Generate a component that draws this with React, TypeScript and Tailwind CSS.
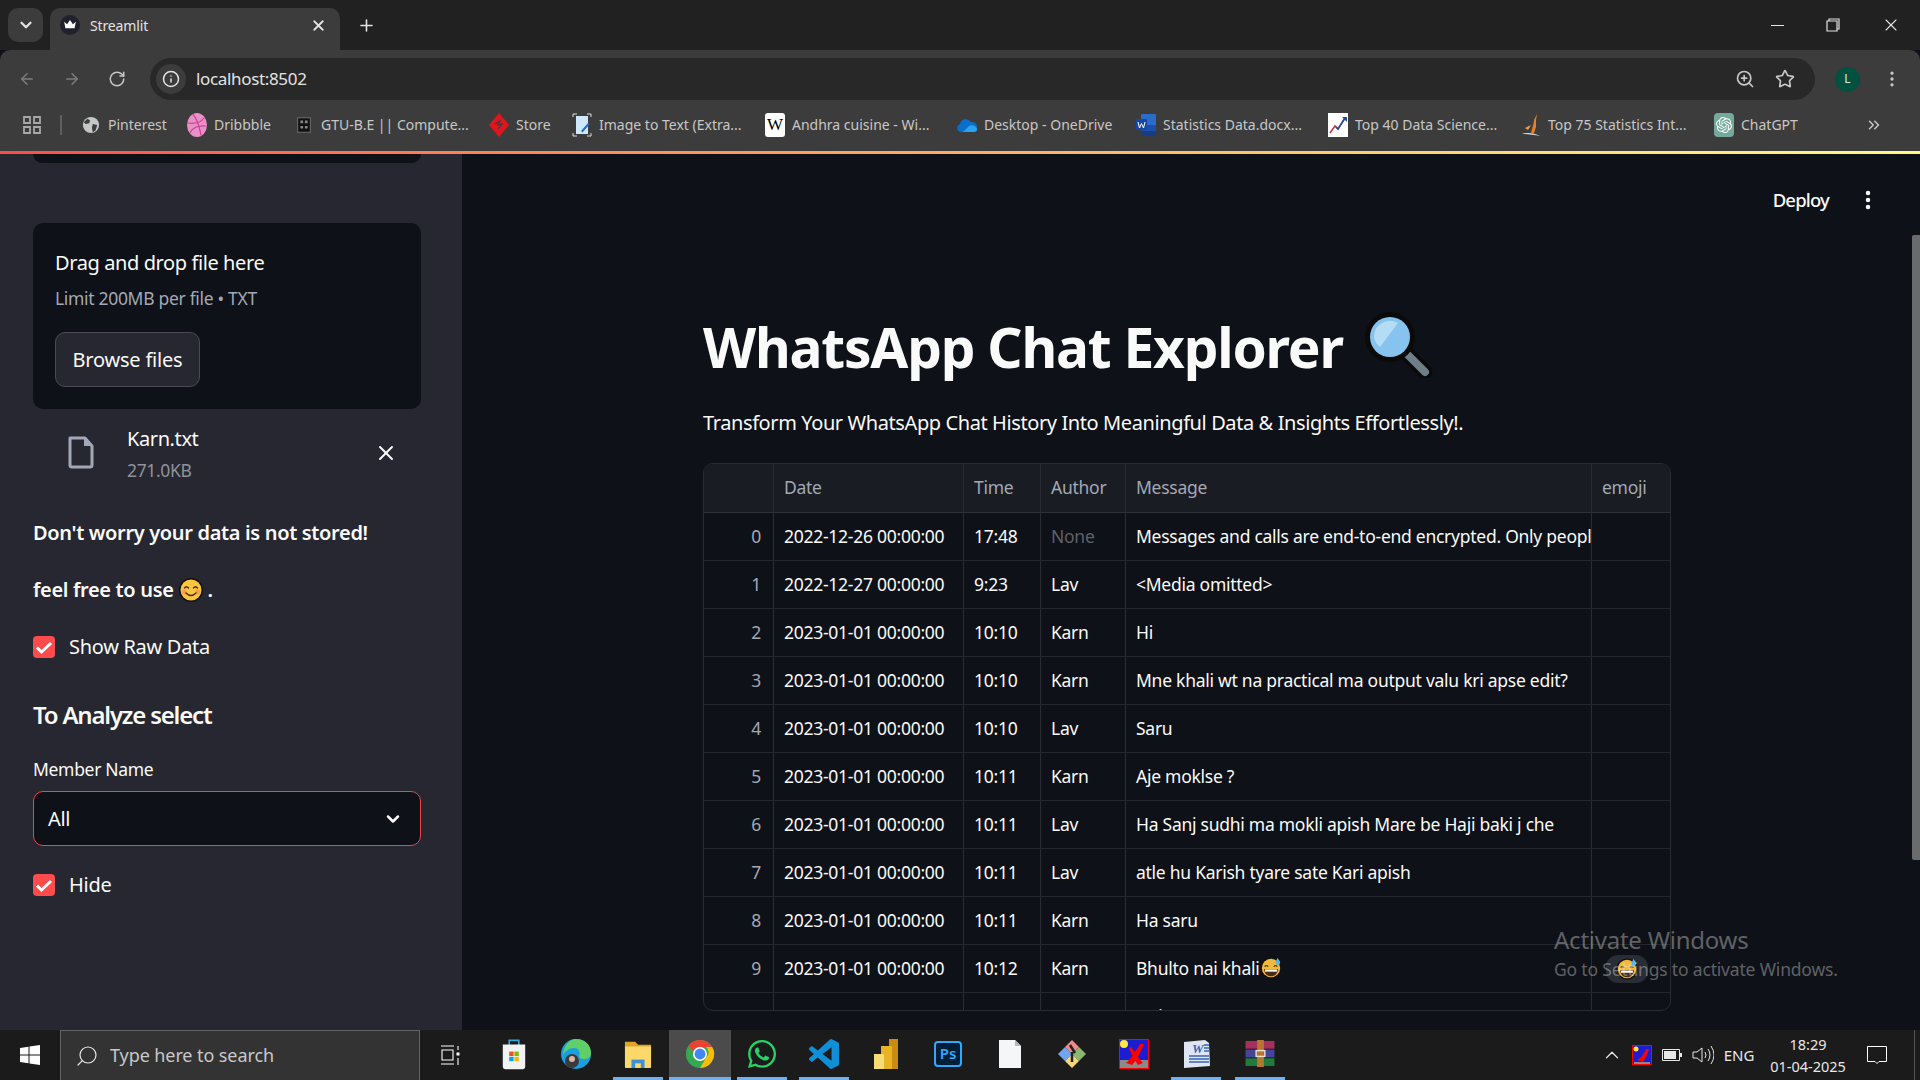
import { ArrowLeft, ArrowRight, ChevronDown, ChevronUp, ChevronsRight, EllipsisVertical, Info, Plus, RotateCw, Search, Star, X, ZoomIn } from "lucide-react";
import { FaWhatsapp } from "react-icons/fa";
import { SiOpenai } from "react-icons/si";
import type { ReactNode } from "react";

const Dribbble = () => (
  <svg viewBox="0 0 20 24" className="w-5 h-6">
    <ellipse cx="10" cy="12" rx="10" ry="12" fill="#ea8fc8" />
    <g fill="none" stroke="#c9458f" strokeWidth="1.2">
      <path d="M6 1.5c3 3 6 10 8 21" />
      <path d="M0.5 10c6 1 13 0 16.500-5" />
      <path d="M3 20c2-5 8-8 16-7" />
    </g>
  </svg>
);

const bookmarks: { label: string; width: string; icon: ReactNode }[] = [
  {
    label: "Pinterest",
    width: "w-[106px]",
    icon: (
      <svg viewBox="0 0 20 20" className="w-[18px] h-[18px]">
        <circle cx="10" cy="10" r="9" fill="#c4c7c5" />
        <path d="M6 3l3 2-1 3-4 1-2-2zM12 9l5 1-2 6-3 2-1-5z" fill="#3c3c3c" />
      </svg>
    ),
  },
  { label: "Dribbble", width: "w-[107px]", icon: <Dribbble /> },
  {
    label: "GTU-B.E || Compute...",
    width: "w-[195px]",
    icon: (
      <svg viewBox="0 0 20 20" className="w-[18px] h-[18px]">
        <rect x="3" y="2" width="14" height="16" fill="#111" stroke="#777" />
        <path d="M6 5h3v3H6zM11 5h3v3h-3zM6 11h3v3H6zM11 11h3v3h-3z" fill="#888" />
      </svg>
    ),
  },
  {
    label: "Store",
    width: "w-[83px]",
    icon: (
      <svg viewBox="0 0 20 24" className="w-5 h-6">
        <path d="M10 0l10 12-10 12L0 12z" fill="#e0161f" />
        <path d="M6 11l5-3-2 4 4-1-4 5" fill="none" stroke="#3c3c3c" strokeWidth="1.2" />
      </svg>
    ),
  },
  {
    label: "Image to Text (Extra...",
    width: "w-[193px]",
    icon: (
      <svg viewBox="0 0 20 24" className="w-5 h-6">
        <path d="M1 4V1h4M15 1h4v3M1 20v3h4M15 23h4v-3" fill="none" stroke="#ddd" strokeWidth="1" />
        <path d="M4 3h12v18H4z" fill="#cfe8fb" />
        <path d="M9 18l7-8 1.500 1.500-7 8z" fill="#1a6fd0" />
      </svg>
    ),
  },
  {
    label: "Andhra cuisine - Wi...",
    width: "w-[192px]",
    icon: (
      <span className="flex items-center justify-center w-5 h-6 bg-white rounded-[3px] text-black text-[17px] leading-none font-['Liberation_Serif',serif]">
        W
      </span>
    ),
  },
  {
    label: "Desktop - OneDrive",
    width: "w-[179px]",
    icon: (
      <svg viewBox="0 0 20 16" className="w-5 h-4">
        <path d="M4 15a4 4 0 0 1-1-7.800A6 6 0 0 1 14 5a4.500 4.500 0 0 1 2 10z" fill="#0a6fc9" />
        <path d="M6 15l6-6c2-1 4-1 5 0 2 .5 3 2 3 3.500S19 15 17 15z" fill="#2aa4ee" />
      </svg>
    ),
  },
  {
    label: "Statistics Data.docx...",
    width: "w-[192px]",
    icon: (
      <svg viewBox="0 0 20 22" className="w-5 h-[22px]">
        <rect x="5" y="0" width="15" height="22" rx="1" fill="#2b6ccb" />
        <rect x="5" y="11" width="15" height="6" fill="#1c50a8" />
        <rect x="5" y="17" width="15" height="5" fill="#143d8a" />
        <rect x="0" y="5" width="11" height="11" rx="1" fill="#1747a6" />
        <path d="M2 8l1.500 6 2-4.500 2 4.500L9 8" fill="none" stroke="#fff" strokeWidth="1" />
      </svg>
    ),
  },
  {
    label: "Top 40 Data Science...",
    width: "w-[193px]",
    icon: (
      <svg viewBox="0 0 20 24" className="w-5 h-6">
        <rect width="20" height="24" fill="#fff" />
        <path d="M2 20l5-7 3 3 7-11" fill="none" stroke="#b9324f" strokeWidth="1.500" />
        <path d="M8 14l2 2 7-11" fill="none" stroke="#1d4fa8" strokeWidth="1.500" />
        <path d="M14 4h5v5z" fill="#1d4fa8" />
      </svg>
    ),
  },
  {
    label: "Top 75 Statistics Int...",
    width: "w-[193px]",
    icon: (
      <svg viewBox="0 0 20 24" className="w-5 h-6">
        <path d="M10 20c1-5 3-9 3-13l3-6-1 6 0 7-2 6z" fill="#e8801e" />
        <path d="M4 15l6-3-3 5z" fill="#e8a04e" />
        <path d="M1 21c6-2 12-1 18 2-6-1-12-2-18-2z" fill="#d8d8e8" />
      </svg>
    ),
  },
  {
    label: "ChatGPT",
    width: "w-[151px]",
    icon: (
      <span className="flex items-center justify-center w-5 h-6 rounded-[4px] bg-[#74aa9c] text-white">
        <SiOpenai className="w-4 h-4" />
      </span>
    ),
  },
];

const rows = [
  ["0", "2022-12-26 00:00:00", "17:48", "None", "Messages and calls are end-to-end encrypted. Only people in this chat can read them"],
  ["1", "2022-12-27 00:00:00", "9:23", "Lav", "<Media omitted>"],
  ["2", "2023-01-01 00:00:00", "10:10", "Karn", "Hi"],
  ["3", "2023-01-01 00:00:00", "10:10", "Karn", "Mne khali wt na practical ma output valu kri apse edit?"],
  ["4", "2023-01-01 00:00:00", "10:10", "Lav", "Saru"],
  ["5", "2023-01-01 00:00:00", "10:11", "Karn", "Aje moklse ?"],
  ["6", "2023-01-01 00:00:00", "10:11", "Lav", "Ha Sanj sudhi ma mokli apish Mare be Haji baki j che"],
  ["7", "2023-01-01 00:00:00", "10:11", "Lav", "atle hu Karish tyare sate Kari apish"],
  ["8", "2023-01-01 00:00:00", "10:11", "Karn", "Ha saru"],
  ["9", "2023-01-01 00:00:00", "10:12", "Karn", "Bhulto nai khali"],
  ["10", "2023-01-01 00:00:00", "10:12", "Lav", "Haina"],
];

const GrinSweat = () => (
  <svg viewBox="0 0 24 24" className="w-[22px] h-[22px] shrink-0">
    <circle cx="12" cy="12" r="11.500" fill="#111" />
    <circle cx="12" cy="12" r="10" fill="#f3b93a" />
    <path d="M5 10.500q2-2 4 0M15 10.500q2-2 4 0" fill="none" stroke="#5b3a10" strokeWidth="1.300" />
    <path d="M4.500 13h15c0 5-3.500 8-7.500 8s-7.500-3-7.500-8z" fill="#4a2a12" />
    <path d="M5.500 13.500h13v2.500h-13z" fill="#fff" />
    <path d="M19 1c2 2.500 3 4 3 5a2.500 2.500 0 0 1-5 0c0-1 1-2.500 2-5z" fill="#55b7ee" />
  </svg>
);

const Smile = () => (
  <svg viewBox="0 0 24 24" className="w-6 h-6 inline-block">
    <circle cx="12" cy="12" r="12" fill="#111" />
    <circle cx="12" cy="12" r="10.500" fill="#fbc63c" />
    <circle cx="5.500" cy="14" r="2.500" fill="#f58a5a" opacity="0.7" />
    <circle cx="18.500" cy="14" r="2.500" fill="#f58a5a" opacity="0.7" />
    <path d="M5.500 10q2-2.500 4 0M14.500 10q2-2.500 4 0M7 15q5 5 10 0" fill="none" stroke="#4a2a12" strokeWidth="1.400" strokeLinecap="round" />
  </svg>
);

const Checkbox = ({ label }: { label: string }) => (
  <div className="flex items-center gap-[14px]">
    <span className="flex items-center justify-center w-[22px] h-[22px] rounded-[4px] bg-[#ff4b4b]">
      <svg viewBox="0 0 22 22" className="w-[22px] h-[22px]">
        <path d="M4 11.500l4.500 4.500L18 7" fill="none" stroke="#fff" strokeWidth="3" />
      </svg>
    </span>
    <span className="text-[20px] leading-[24px] tracking-[-0.015em] text-[#fafafa]">{label}</span>
  </div>
);

const Sidebar = () => (
  <aside className="w-[462px] shrink-0 h-full bg-[#262730] px-[33px] text-[#fafafa] overflow-hidden">
    <div className="h-[9px] w-[388px] bg-[#0e1117] rounded-b-[10px]" />
    <div className="mt-[60px] h-[186px] w-[388px] bg-[#0e1117] rounded-[10px] px-[22px] pt-[26px]">
      <div className="text-[20px] leading-[28px] tracking-[-0.02em]">Drag and drop file here</div>
      <div className="mt-[9px] text-[17.5px] leading-[24px] tracking-[-0.018em] text-[#a3a8b4]">Limit 200MB per file • TXT</div>
      <button className="mt-[22px] w-[145px] h-[55px] rounded-[10px] bg-[#262730] border border-[#4a4b55] text-[20px] tracking-[-0.01em]">
        Browse files
      </button>
    </div>
    <div className="mt-[17px] h-[56px] w-[388px] flex items-center pl-[35px]">
      <svg viewBox="0 0 26 33" className="w-[26px] h-[33px] shrink-0 -translate-y-[2px]">
        <path d="M2 2h15l7 8v19a2 2 0 0 1-2 2H4a2 2 0 0 1-2-2z" fill="none" stroke="#a3a8b8" strokeWidth="3" strokeLinejoin="round" />
        <path d="M16 2l8 8h-8z" fill="#a3a8b8" />
      </svg>
      <div className="ml-[33px]">
        <div className="text-[20px] leading-[26px] tracking-[-0.02em]">Karn.txt</div>
        <div className="mt-[6px] text-[17.5px] leading-[24px] tracking-[-0.02em] text-[#8f929b]">271.0KB</div>
      </div>
      <X className="ml-auto mr-[23px] w-6 h-6 -translate-y-[1px]" strokeWidth={2} />
    </div>
    <div className="mt-[37px] text-[20px] leading-[28px] font-semibold tracking-[-0.017em]">Don't worry your data is not stored!</div>
    <div className="mt-[29px] h-[28px] flex items-center gap-[5px] text-[20px] leading-[28px] font-semibold tracking-[-0.017em]">
      <span>feel free to use</span>
      <Smile />
      <span>.</span>
    </div>
    <div className="mt-[31px]">
      <Checkbox label="Show Raw Data" />
    </div>
    <div className="mt-[39px] text-[24px] leading-[34px] font-semibold tracking-[-0.05em]">To Analyze select</div>
    <div className="mt-[25px] text-[17.5px] leading-[24px] tracking-[-0.018em]">Member Name</div>
    <div className="mt-[10px] h-[55px] w-[388px] flex items-center justify-between bg-[#0e1117] border border-[#f0444b] rounded-[10px] pl-[14px] pr-[17px]">
      <span className="text-[20px] tracking-[-0.02em]">All</span>
      <ChevronDown className="w-[20px] h-[20px]" strokeWidth={3} />
    </div>
    <div className="mt-[27px]">
      <Checkbox label="Hide" />
    </div>
  </aside>
);

const DataTable = () => (
  <div className="mt-[25px] w-[968px] h-[548px] border border-[#2a2c33] rounded-[10px] overflow-hidden text-[17.5px] tracking-[-0.015em]">
    <div className="flex h-[49px] bg-[#1a1c24] text-[#a3a8b4] border-b border-[#2f3139]">
      <div className="w-[70px] shrink-0 border-r border-[#2a2c33]" />
      <div className="w-[190px] shrink-0 border-r border-[#2a2c33] px-[10px] leading-[46px]">Date</div>
      <div className="w-[77px] shrink-0 border-r border-[#2a2c33] px-[10px] leading-[46px]">Time</div>
      <div className="w-[85px] shrink-0 border-r border-[#2a2c33] px-[10px] leading-[46px]">Author</div>
      <div className="w-[466px] shrink-0 border-r border-[#2a2c33] px-[10px] leading-[46px]">Message</div>
      <div className="flex-1 px-[10px] leading-[46px]">emoji</div>
    </div>
    {rows.map((row) => (
      <div key={row[0]} className="flex h-[48px] border-b border-[#25272e] text-[#fafafa] leading-[46px]">
        <div className="w-[70px] shrink-0 border-r border-[#2a2c33] pr-[12px] text-right text-[#a3a8b4]">{row[0]}</div>
        <div className="w-[190px] shrink-0 border-r border-[#2a2c33] px-[10px]">{row[1]}</div>
        <div className="w-[77px] shrink-0 border-r border-[#2a2c33] px-[10px]">{row[2]}</div>
        <div className={`w-[85px] shrink-0 border-r border-[#2a2c33] px-[10px] ${row[3] === "None" ? "text-[#5f6168]" : ""}`}>{row[3]}</div>
        <div className="w-[466px] shrink-0 border-r border-[#2a2c33] pl-[10px] pb-[1px] overflow-hidden whitespace-nowrap flex items-center gap-[1px]">
          {row[4]}
          {row[0] === "9" && <GrinSweat />}
        </div>
        <div className="flex-1 flex items-center justify-center">
          {row[0] === "9" && (
            <span className="flex items-center justify-center w-[42px] h-[28px] ml-[-8px] rounded-[12px] bg-[#2a2c36]">
              <GrinSweat />
            </span>
          )}
        </div>
      </div>
    ))}
  </div>
);

const Chrome = () => (
  <header className="shrink-0 font-['Noto_Sans',sans-serif]">
    <div className="h-[50px] bg-[#202120] flex items-end pl-2 text-[#e3e3e3]">
      <div className="self-start mt-2 w-[35px] h-[34px] rounded-[10px] bg-[#3c3c3c] flex items-center justify-center">
        <ChevronDown className="w-[18px] h-[18px]" strokeWidth={3} />
      </div>
      <div className="ml-[7px] w-[290px] h-[42px] rounded-t-[10px] bg-[#3c3c3c] flex items-center pl-[10px] pr-[13px] pb-[8px]">
        <span className="w-5 h-5 rounded-full bg-[#20212b] flex items-center justify-center">
          <svg viewBox="0 0 16 12" className="w-[14px] h-[10px]">
            <path d="M1 2l3.500 3L8 0l3.500 5L15 2l-1.500 8h-11z" fill="#fff" />
          </svg>
        </span>
        <span className="ml-[10px] text-[14px] tracking-[-0.01em]">Streamlit</span>
        <X className="ml-auto w-[17px] h-[17px]" strokeWidth={2.5} />
      </div>
      <Plus className="self-start mt-[16px] ml-[17px] w-[19px] h-[19px]" strokeWidth={2} />
      <div className="ml-auto self-start flex items-center h-[50px] mt-0">
        <div className="w-[54px] flex justify-center">
          <span className="w-[13px] h-px bg-[#e3e3e3]" />
        </div>
        <div className="w-[58px] flex justify-center">
          <svg viewBox="0 0 14 14" className="w-[14px] h-[14px]">
            <path d="M3 3V1h10v10h-2M1 3h10v10H1z" fill="none" stroke="#e3e3e3" strokeWidth="1.200" />
          </svg>
        </div>
        <div className="w-[58px] flex justify-center">
          <X className="w-[20px] h-[20px]" strokeWidth={1.3} />
        </div>
      </div>
    </div>
    <div className="h-[50px] bg-[#3c3c3c] flex items-end rounded-t-[10px] text-[#c7c7c7]">
      <div className="h-[42px] w-[150px] flex items-center pl-[18px] gap-[27px] text-[#7c7c7c]">
        <ArrowLeft className="w-[18px] h-[18px]" />
        <ArrowRight className="w-[18px] h-[18px]" />
        <RotateCw className="w-[18px] h-[18px] text-[#c7c7c7]" />
      </div>
      <div className="w-[1665px] h-[42px] rounded-full bg-[#282828] flex items-center pl-[6px] pr-[20px]">
        <span className="w-[30px] h-[30px] rounded-full bg-[#3c3c3c] flex items-center justify-center">
          <Info className="w-[18px] h-[18px] text-[#e3e3e3]" />
        </span>
        <span className="ml-[10px] text-[17px] tracking-[-0.02em] text-[#e3e3e3]">localhost:8502</span>
        <ZoomIn className="ml-auto w-[20px] h-[20px]" />
        <Star className="ml-[20px] w-[20px] h-[20px]" />
      </div>
      <div className="h-[42px] flex-1 flex items-center pl-[20px] pr-[18px] justify-between">
        <span className="w-[25px] h-[25px] rounded-full bg-[#00513f] text-[#d8e8e3] text-[12px] flex items-center justify-center">L</span>
        <EllipsisVertical className="w-[20px] h-[20px]" />
      </div>
    </div>
    <div className="h-[51px] bg-[#3c3c3c] flex items-center pl-[23px] pb-[2px] text-[14px] text-[#c7c7c7]">
      <svg viewBox="0 0 18 18" className="w-[18px] h-[18px] shrink-0">
        <path d="M1 1h6v6H1zM11 1h6v6h-6zM1 11h6v6H1zM11 11h6v6h-6z" fill="none" stroke="#a8a8a8" strokeWidth="1.800" />
      </svg>
      <span className="ml-[19px] mr-[19px] w-[2px] h-[20px] bg-[#5e5e5e] shrink-0" />
      {bookmarks.map((b) => (
        <div key={b.label} className={`${b.width} shrink-0 flex items-center gap-[7px] whitespace-nowrap`}>
          <span className="w-5 flex items-center justify-center shrink-0">{b.icon}</span>
          <span>{b.label}</span>
        </div>
      ))}
      <ChevronsRight className="w-[18px] h-[18px]" />
    </div>
    <div className="h-[3px] bg-linear-to-r from-[#ff4b4b] to-[#fffd80]" />
  </header>
);

const taskIcons: { key: string; bar: string; node: ReactNode }[] = [
  {
    key: "store",
    bar: "",
    node: (
      <svg viewBox="0 0 30 40" className="w-[28px] h-[32px]">
        <path d="M9 9V3h12v6" fill="none" stroke="#35a8e0" strokeWidth="2" />
        <path d="M1 8h28v28a3 3 0 0 1-3 3H4a3 3 0 0 1-3-3z" fill="#f2f2f2" />
        <path d="M9 17h5.500v5.500H9z" fill="#f25022" />
        <path d="M15.500 17H21v5.500h-5.500z" fill="#7fba00" />
        <path d="M9 23.500h5.500V29H9z" fill="#00a4ef" />
        <path d="M15.500 23.500H21V29h-5.500z" fill="#ffb900" />
      </svg>
    ),
  },
  {
    key: "edge",
    bar: "",
    node: (
      <svg viewBox="0 0 32 32" className="w-[32px] h-[32px]">
        <circle cx="16" cy="16" r="15" fill="#1a9fe0" />
        <path d="M16 1c9 0 15 6 15 14 0 4-3 6-7 6-3 0-5-1-5-3 2-3 0-8-5-8-5 0-9 3-11 7C4 8 9 1 16 1z" fill="#5fd068" />
        <circle cx="12" cy="23" r="7" fill="#3a3a3a" />
        <circle cx="12" cy="21" r="3" fill="#d8b8a8" />
      </svg>
    ),
  },
  {
    key: "explorer",
    bar: "bg-[#6fb1f0] w-[50px]",
    node: (
      <svg viewBox="0 0 30 32" className="w-[28px] h-[30px]">
        <path d="M1 3h11l3 3h14v4H1z" fill="#e0a526" />
        <path d="M1 8h28v22a1 1 0 0 1-1 1H2a1 1 0 0 1-1-1z" fill="#fcd76a" />
        <path d="M8 22h14v9H8z" fill="#3d8fd8" />
        <path d="M12 26h6v5h-6z" fill="#fcd76a" />
      </svg>
    ),
  },
  {
    key: "chrome",
    bar: "bg-[#6fb1f0] w-full",
    node: (
      <svg viewBox="0 0 32 32" className="w-[30px] h-[30px]">
        <circle cx="16" cy="16" r="15" fill="#34a853" />
        <path d="M16 1a15 15 0 0 1 13 7.500H16a7.500 7.500 0 0 0-7 5L3.500 7.500A15 15 0 0 1 16 1z" fill="#ea4335" />
        <path d="M29 8.500A15 15 0 0 1 16 31l6.500-11a7.500 7.500 0 0 0 0-11.500z" fill="#fbbc05" />
        <circle cx="16" cy="16" r="7.500" fill="#fff" />
        <circle cx="16" cy="16" r="5.800" fill="#4285f4" />
      </svg>
    ),
  },
  {
    key: "whatsapp",
    bar: "bg-[#6fb1f0] w-[50px]",
    node: <FaWhatsapp className="w-[32px] h-[32px] text-[#25d366]" />,
  },
  {
    key: "vscode",
    bar: "bg-[#6fb1f0] w-[50px]",
    node: (
      <svg viewBox="0 0 24 24" className="w-[30px] h-[30px]">
        <path
          d="M23.150 2.587L18.210.21a1.494 1.494 0 0 0-1.705.29l-9.460 8.630-4.120-3.128a.999.999 0 0 0-1.276.057L.327 7.261A1 1 0 0 0 .326 8.740L3.899 12 .326 15.260a1 1 0 0 0 .001 1.479L1.650 17.940a.999.999 0 0 0 1.276.057l4.120-3.128 9.460 8.630a1.492 1.492 0 0 0 1.704.29l4.942-2.377A1.500 1.500 0 0 0 24 20.060V3.939a1.500 1.500 0 0 0-.850-1.352zm-5.146 14.861L10.826 12l7.178-5.448v10.896z"
          fill="#0e8fd8"
        />
      </svg>
    ),
  },
  {
    key: "powerbi",
    bar: "",
    node: (
      <svg viewBox="0 0 24 30" className="w-[24px] h-[30px]">
        <path d="M15 0h9v30h-9z" fill="#c98c10" />
        <path d="M7 7h11v23H7z" fill="#eab326" />
        <path d="M0 15h10v15H0z" fill="#f8dc74" />
      </svg>
    ),
  },
  {
    key: "ps",
    bar: "",
    node: (
      <span className="w-[28px] h-[26px] rounded-[4px] bg-[#001e36] border-2 border-[#31a8ff] text-[#31a8ff] text-[15px] leading-[21px] font-semibold text-center font-['Noto_Sans',sans-serif]">
        Ps
      </span>
    ),
  },
  {
    key: "file",
    bar: "",
    node: (
      <svg viewBox="0 0 22 28" className="w-[22px] h-[28px]">
        <path d="M0 0h16l6 6v22H0z" fill="#f5f6f8" />
        <path d="M16 0l6 6h-6z" fill="#b8b8b8" />
      </svg>
    ),
  },
  {
    key: "git",
    bar: "",
    node: (
      <svg viewBox="0 0 30 30" className="w-[30px] h-[30px]">
        <path d="M15 1l7 7-7 7-7-7z" fill="#f08a8a" />
        <path d="M22 8l7 7-7 7-7-7z" fill="#8ab86e" />
        <path d="M8 8l7 7-7 7-7-7z" fill="#72a5f0" />
        <path d="M15 15l7 7-7 7-7-7z" fill="#f5d77a" />
        <path d="M13 6l5 8M15 13v10" stroke="#222" strokeWidth="2.500" />
      </svg>
    ),
  },
  {
    key: "xampp",
    bar: "",
    node: (
      <svg viewBox="0 0 30 30" className="w-[30px] h-[30px]">
        <rect x="0.500" y="0.500" width="29" height="29" fill="#1c1cd0" stroke="#f00" />
        <path d="M1 21h28v8H1z" fill="#8a8a8a" />
        <circle cx="5" cy="5" r="4" fill="#ffe93b" />
        <path d="M7 24C12 20 17 12 21 5h4C22 12 18 21 13 26zM12 8c4 4 7 11 12 16l-5 2C15 20 12 14 10 10z" fill="#f00" />
      </svg>
    ),
  },
  {
    key: "word",
    bar: "bg-[#6fb1f0] w-[50px]",
    node: (
      <svg viewBox="0 0 30 28" className="w-[30px] h-[28px]">
        <path d="M3 2l21-2 4 3 1 23-26 2z" fill="#dfe6f3" />
        <text x="11" y="13" fontSize="13" fontWeight="700" fontStyle="italic" fontFamily="'Liberation Serif', serif" fill="#3b64b4">W</text>
        <path d="M23 5h5M23 8h5M23 11h5M8 16h20M8 19h20M8 22h20" stroke="#3b64b4" strokeWidth="1.400" />
      </svg>
    ),
  },
  {
    key: "winrar",
    bar: "bg-[#6fb1f0] w-[50px] ml-[8px]",
    node: (
      <svg viewBox="0 0 30 28" className="w-[30px] h-[27px] ml-[3px]">
        <rect y="1" width="30" height="8" fill="#a5305c" />
        <rect y="10" width="30" height="8" fill="#45459c" />
        <rect y="19" width="30" height="8" fill="#1f7a3c" />
        <path d="M12 0h7v28h-7z" fill="#b8762e" />
        <rect x="11" y="11" width="9" height="6" fill="none" stroke="#e8e0c8" strokeWidth="1.500" />
      </svg>
    ),
  },
];

const Taskbar = () => (
  <footer className="h-[50px] shrink-0 bg-[#1b1b1b] flex text-white font-['Noto_Sans',sans-serif]">
    <div className="w-[60px] shrink-0 flex items-center justify-center">
      <svg viewBox="0 0 20 20" className="w-5 h-5">
        <path d="M0 3l8.500-1.200V9.500H0zM9.500 1.600L20 0v9.500H9.500zM0 10.500h8.500v7.700L0 17zM9.500 10.500H20V20L9.500 18.400z" fill="#fff" />
      </svg>
    </div>
    <div className="w-[360px] shrink-0 bg-[#333333] border border-[#636363] border-b-0 flex items-center pl-[14px]">
      <Search className="w-[24px] h-[24px] -scale-x-100 text-[#e8e8e8]" strokeWidth={1.2} />
      <span className="ml-[11px] text-[18px] tracking-[-0.005em] text-[#c8c8c8]">Type here to search</span>
    </div>
    <div className="w-[63px] shrink-0 flex items-center justify-center pr-[3px]">
      <svg viewBox="0 0 20 20" className="w-5 h-5">
        <path d="M1 1h13M1 19h13M2 5h11v10H2zM18 1v4M18 13v7" fill="none" stroke="#fff" strokeWidth="1.100" />
        <rect x="16.500" y="7.500" width="3" height="3" fill="#fff" />
      </svg>
    </div>
    {taskIcons.map((t) => (
      <div key={t.key} className={`w-[62px] shrink-0 flex flex-col ${t.key === "chrome" ? "bg-[#4b4b4b]" : ""}`}>
        <div className="flex-1 flex items-center justify-center">{t.node}</div>
        <div className={`h-[3px] mx-auto ${t.bar}`} />
      </div>
    ))}
    <div className="ml-auto flex items-center text-[#e8e8e8]">
      <div className="w-[30px] flex justify-center">
        <ChevronUp className="w-[22px] h-[22px]" strokeWidth={1.3} />
      </div>
      <div className="w-[30px] flex justify-center">
        <svg viewBox="0 0 20 20" className="w-5 h-5">
          <rect x="0.500" y="0.500" width="19" height="19" fill="#1c1cd0" stroke="#f00" />
          <circle cx="4" cy="4" r="2.500" fill="#ffe93b" />
          <path d="M2 17h16v2H2z" fill="#8a8a8a" />
          <path d="M5 15c4-2 7-6 9-11h3c-1 5-4 10-6 13z" fill="#f00" />
        </svg>
      </div>
      <div className="w-[30px] flex justify-center">
        <svg viewBox="0 0 20 12" className="w-[20px] h-[12px]">
          <path d="M.5.5h17v11H.5z" fill="none" stroke="#e8e8e8" />
          <path d="M2 2h12v8H2z" fill="#e8e8e8" />
          <path d="M18 4h2v4h-2z" fill="#e8e8e8" />
        </svg>
      </div>
      <div className="w-[32px] flex justify-center">
        <svg viewBox="0 0 22 20" className="w-[22px] h-[20px]">
          <path d="M1 7h4l5-4v14l-5-4H1z" fill="none" stroke="#e8e8e8" />
          <path d="M13 7q2 3 0 6M16 4q4 6 0 12M19 1q6 9 0 18" fill="none" stroke="#e8e8e8" />
        </svg>
      </div>
      <div className="w-[40px] text-center text-[15px]">ENG</div>
      <div className="w-[98px] text-center text-[14.5px] leading-[22px]">
        <div>18:29</div>
        <div>01-04-2025</div>
      </div>
      <div className="w-[40px] flex justify-center">
        <svg viewBox="0 0 20 20" className="w-5 h-5">
          <path d="M.5 1.500h19v15H12l-2 2-2-2H.5z" fill="none" stroke="#fff" />
        </svg>
      </div>
      <div className="w-[23px] h-full">
        <div className="w-px h-full ml-[17px] bg-[#555]" />
      </div>
    </div>
  </footer>
);

export default function App() {
  return (
    <div className="h-screen w-full flex flex-col overflow-hidden bg-[#0e1117]">
      <Chrome />
      <div className="flex-1 min-h-0 flex font-['Noto_Sans',sans-serif]">
        <Sidebar />
        <main className="relative flex-1 min-w-0 pl-[241px] text-[#fafafa] overflow-hidden">
          <div className="absolute right-0 top-[81px] w-2 h-[625px] bg-[#6b6b6e] rounded-l-[2px]" />
          <div className="h-[92px] -ml-[241px] flex items-center justify-end pr-[40px]">
            <span className="text-[18.5px] tracking-[-0.045em] font-medium">Deploy</span>
            <EllipsisVertical className="ml-[27px] w-6 h-6" strokeWidth={2.5} />
          </div>
          <div className="mt-[65px] flex items-center h-[72px]">
            <h1 className="text-[55px] leading-[72px] font-bold tracking-[-0.022em]">WhatsApp Chat Explorer</h1>
            <svg viewBox="0 0 70 68" className="ml-[20px] w-[70px] h-[68px] -translate-y-[3px]">
              <path d="M44 44l18 18" stroke="#0a0a0a" strokeWidth="15" strokeLinecap="round" />
              <path d="M44 44l18 18" stroke="#6f7f88" strokeWidth="8" strokeLinecap="round" />
              <circle cx="27" cy="27" r="25" fill="#0a0a0a" />
              <circle cx="27" cy="27" r="20" fill="#86c3ee" />
              <path d="M11 27a16 16 0 0 1 24-14L17 37a16 16 0 0 1-6-10z" fill="#b5dcf5" />
            </svg>
          </div>
          <p className="mt-[25px] h-[30px] text-[20px] leading-[30px] tracking-[-0.02em]">
            Transform Your WhatsApp Chat History Into Meaningful Data &amp; Insights Effortlessly!.
          </p>
          <DataTable />
          <div className="absolute left-[1092px] top-[770px] text-white/35 pointer-events-none">
            <div className="text-[24px] leading-[32px] tracking-[-0.01em]">Activate Windows</div>
            <div className="text-[17.5px] leading-[26px] tracking-[-0.01em]">Go to Settings to activate Windows.</div>
          </div>
        </main>
      </div>
      <Taskbar />
    </div>
  );
}
